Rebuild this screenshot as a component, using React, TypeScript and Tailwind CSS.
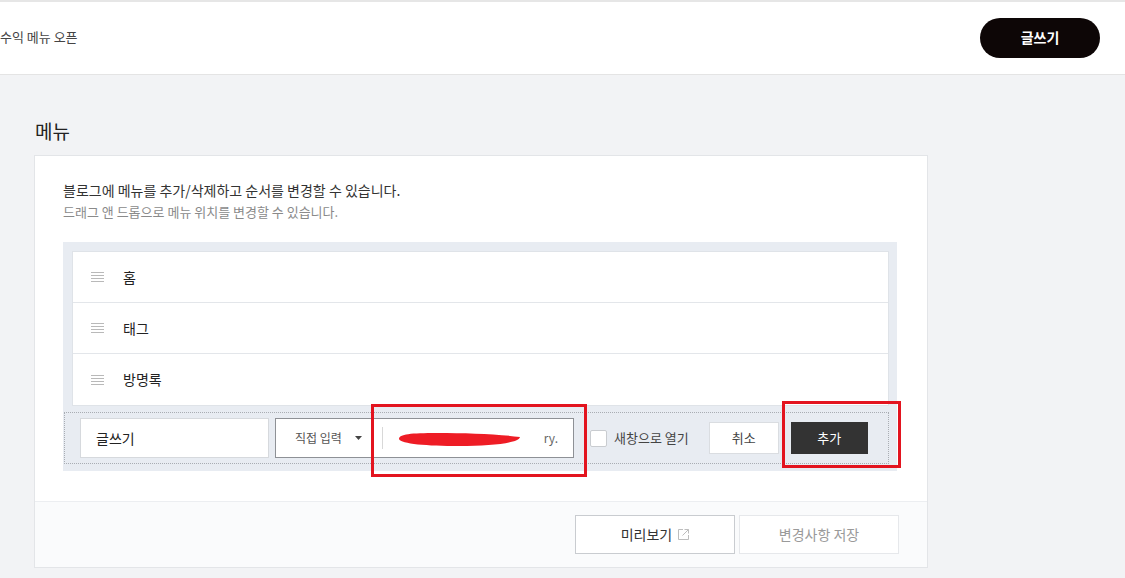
const font = { fontFamily: '"Noto Sans CJK KR", "Noto Sans", sans-serif' };

function DragHandle() {
  return (
    <svg width="13" height="10" viewBox="0 0 13 10" className="shrink-0">
      <path d="M0 0.5H13M0 3.5H13M0 6.5H13M0 9.5H13" stroke="#b9b9b9" strokeWidth="1" />
    </svg>
  );
}

function ExternalIcon() {
  return (
    <svg width="11" height="11" viewBox="0 0 11 11" className="ml-[6px]">
      <path d="M5 0.5H0.5V10.5H10.5V6" stroke="#bdbdbd" fill="none" strokeWidth="1" />
      <path d="M6.5 0.5H10.5V4.5M10.5 0.5L4.5 6.5" stroke="#bdbdbd" fill="none" strokeWidth="1" />
    </svg>
  );
}

const menus = ["홈", "태그", "방명록"];

export default function App() {
  return (
    <div className="w-[1125px] h-[578px] overflow-hidden bg-[#f2f3f5] text-[#333]" style={font}>
      <header className="h-[75px] bg-white border-t-2 border-[#e6e6e6] border-b border-b-[#e4e4e4] flex items-center justify-between pr-[25px]">
        <span className="text-[13px] text-[#444] -mt-[2px]">수익 메뉴 오픈</span>
        <button className="w-[120px] h-[40px] rounded-full bg-[#0d0606] text-white text-[14px] font-bold -mt-[1px]">
          글쓰기
        </button>
      </header>

      <main className="pl-[34px] pt-[44px]">
        <h2 className="text-[19px] leading-[24px] text-[#222] pl-[1px]">메뉴</h2>

        <section className="mt-[12px] w-[894px] bg-white border border-[#e3e5e8]">
          <div className="px-[28px] pt-[24px] pb-[30px]">
            <p className="text-[14px] leading-[20px] text-[#333]">블로그에 메뉴를 추가/삭제하고 순서를 변경할 수 있습니다.</p>
            <p className="text-[13px] leading-[20px] mt-[2px] text-[#8a8a8a]">드래그 앤 드롭으로 메뉴 위치를 변경할 수 있습니다.</p>

            <div className="mt-[20px] w-[834px] bg-[#e8ecf2] pt-[9px] pb-[7px] pl-[9px] pr-[8px]">
              <ul className="bg-white border border-[#dfe3e8]">
                {menus.map((m, i) => (
                  <li
                    key={m}
                    className={`h-[51px] flex items-center pl-[18px] ${i < menus.length - 1 ? "border-b border-[#e3e6ea]" : ""}`}
                  >
                    <DragHandle />
                    <span className="ml-[19px] text-[14px] text-[#222]">{m}</span>
                  </li>
                ))}
              </ul>

              <div className="relative mt-[6px] -ml-[8px] h-[52px] border border-dotted border-[#a9adb3] flex items-center pl-[15px]">
                <div className="w-[189px] h-[40px] bg-white border border-[#d6d9dd] flex items-center pl-[15px] text-[14px] text-[#222]">
                  글쓰기
                </div>
                <div className="ml-[6px] w-[299px] h-[40px] bg-white border border-[#8e9196] flex items-center">
                  <div className="w-[106px] flex items-center pl-[19px] text-[12px] text-[#555]">
                    직접 입력
                    <svg width="7" height="4" viewBox="0 0 7 4" className="ml-[13px]">
                      <path d="M0 0H7L3.5 4Z" fill="#444" />
                    </svg>
                  </div>
                  <div className="w-px h-[22px] bg-[#d8d8d8]" />
                  <div className="relative flex-1 h-full flex items-center justify-end pr-[15px] text-[12px] text-[#666]">
                    <span>ry.</span>
                    <svg width="124" height="18" viewBox="0 0 124 18" className="absolute left-[14px] top-[11px]">
                      <path d="M2 9C2 4 14 3 40 3C70 3 100 4 123 7C122 13 95 16 62 16C30 16 4 14 2 9Z" fill="#ee1c25" />
                    </svg>
                  </div>
                </div>
                <label className="ml-[16px] flex items-center text-[13px] text-[#444]">
                  <span className="w-[17px] h-[17px] bg-white border border-[#c9ccd0] rounded-[2px]" />
                  <span className="ml-[7px]">새창으로 열기</span>
                </label>
                <button className="ml-[20px] w-[70px] h-[32px] bg-white border border-[#dadde1] text-[13px] text-[#444]">취소</button>
                <button className="ml-[12px] w-[77px] h-[32px] bg-[#333] text-[13px] text-white">추가</button>

                <div className="absolute left-[306px] top-[-9px] w-[216px] h-[73px] border-[3px] border-[#e3141f]" />
                <div className="absolute left-[717px] top-[-12px] w-[119px] h-[67px] border-[3px] border-[#e3141f]" />
              </div>
            </div>
          </div>

          <footer className="h-[66px] bg-[#fafbfc] border-t border-[#eceef1] flex items-center justify-end pr-[28px] gap-[4px]">
            <button className="w-[160px] h-[39px] bg-white border border-[#c9ccd0] flex items-center justify-center text-[14px] text-[#333]">
              미리보기
              <ExternalIcon />
            </button>
            <button className="w-[160px] h-[39px] bg-white border border-[#e6e8eb] text-[14px] text-[#9a9a9a]">변경사항 저장</button>
          </footer>
        </section>
      </main>
    </div>
  );
}
